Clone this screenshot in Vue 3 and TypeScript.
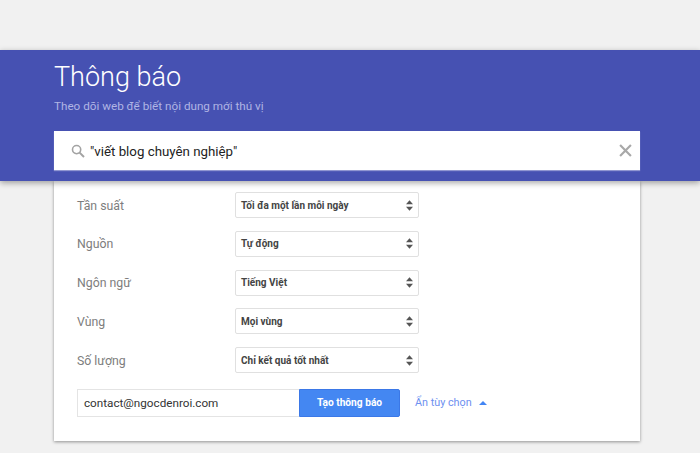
<script setup lang="ts">
const rows = [
  { label: 'Tần suất', value: 'Tối đa một lần mỗi ngày' },
  { label: 'Nguồn', value: 'Tự động' },
  { label: 'Ngôn ngữ', value: 'Tiếng Việt' },
  { label: 'Vùng', value: 'Mọi vùng' },
  { label: 'Số lượng', value: 'Chỉ kết quả tốt nhất' },
];
</script>

<template>
  <div class="page">
    <header class="header">
      <div class="inner">
        <h1 class="title">Thông báo</h1>
        <p class="subtitle">Theo dõi web để biết nội dung mới thú vị</p>
        <div class="search">
          <svg class="search-icon" viewBox="0 0 14 14" width="14" height="14" aria-hidden="true">
            <circle cx="5.6" cy="5.6" r="4.1" fill="none" stroke="#a3a3a3" stroke-width="1.6" />
            <path d="M8.6 8.6 13 13" stroke="#a3a3a3" stroke-width="2" fill="none" />
          </svg>
          <span class="query">"viết blog chuyên nghiệp"</span>
          <svg class="clear" viewBox="0 0 12 12" width="13" height="13" aria-hidden="true">
            <path d="M1 1 11 11M11 1 1 11" stroke="#a8a8a8" stroke-width="2" fill="none" />
          </svg>
        </div>
      </div>
    </header>

    <section class="card">
      <div v-for="row in rows" :key="row.label" class="row">
        <span class="label">{{ row.label }}</span>
        <div class="select">
          <span>{{ row.value }}</span>
          <svg viewBox="0 0 8 12" width="7" height="11" aria-hidden="true">
            <path d="M4 0 8 4.5H0ZM0 7.5H8L4 12Z" fill="#555" />
          </svg>
        </div>
      </div>

      <div class="actions">
        <div class="email">contact@ngocdenroi.com</div>
        <button type="button" class="create">Tạo thông báo</button>
        <a class="toggle">Ẩn tùy chọn<i class="caret"></i></a>
      </div>
    </section>
  </div>
</template>

<style>
html,
body {
  margin: 0;
  background: #f1f1f1;
}
</style>

<style scoped>
.page {
  height: 453px;
  overflow: hidden;
  padding-top: 50px;
  box-sizing: border-box;
  background: #f1f1f1;
  font-family: Roboto, "Noto Sans", sans-serif;
}

.header {
  position: relative;
  z-index: 1;
  height: 131px;
  background: #4651b2;
  box-shadow: 0 2px 6px rgba(0, 0, 0, 0.35);
}

.inner {
  margin-left: 54px;
  width: 586px;
}

.title {
  margin: 0;
  padding-top: 9px;
  font-size: 27px;
  line-height: 36px;
  font-weight: 300;
  color: #fff;
}

.subtitle {
  margin: 3px 0 0;
  font-size: 11.7px;
  line-height: 16px;
  color: #b0b5e4;
}

.search {
  display: flex;
  align-items: center;
  height: 39px;
  margin-top: 17px;
  padding: 0 8px 0 17px;
  background: #fff;
  box-shadow: 0 1px 1px rgba(255, 255, 255, 0.4);
}

.search-icon {
  margin-right: 5px;
}

.query {
  flex: 1;
  padding-top: 2px;
  font-size: 13.3px;
  color: #222;
}

.card {
  width: 586px;
  height: 260px;
  margin-left: 54px;
  padding: 11px 0 0 23px;
  box-sizing: border-box;
  background: #fff;
  box-shadow: 0 1px 3px rgba(0, 0, 0, 0.4);
  display: flex;
  flex-direction: column;
  gap: 12.75px;
}

.row {
  display: flex;
  align-items: center;
}

.label {
  width: 158px;
  padding-top: 1px;
  font-size: 12.3px;
  color: #7d7d7d;
}

.select {
  display: flex;
  align-items: center;
  justify-content: space-between;
  width: 184px;
  height: 26px;
  padding: 0 5px;
  box-sizing: border-box;
  background: #fff;
  border: 1px solid #e0e0e0;
  border-radius: 2px;
  font-size: 10px;
  font-weight: 700;
  color: #444;
}

.actions {
  display: flex;
  align-items: center;
  margin-top: 3px;
}

.email {
  width: 222px;
  height: 28px;
  padding-left: 6px;
  box-sizing: border-box;
  border: 1px solid #e4e4e4;
  border-right: 0;
  font-size: 11.7px;
  line-height: 26px;
  color: #333;
}

.create {
  width: 101px;
  height: 28px;
  padding: 0;
  background: #4487f2;
  border: 1px solid #3b78e7;
  border-radius: 0 2px 2px 0;
  font-family: inherit;
  font-size: 10.2px;
  font-weight: 700;
  color: #fff;
}

.toggle {
  display: flex;
  align-items: center;
  margin-left: 15px;
  font-size: 10.8px;
  color: #6d8ff0;
}

.caret {
  width: 0;
  height: 0;
  margin-left: 7px;
  border-left: 4px solid transparent;
  border-right: 4px solid transparent;
  border-bottom: 4px solid #4285f4;
}
</style>
